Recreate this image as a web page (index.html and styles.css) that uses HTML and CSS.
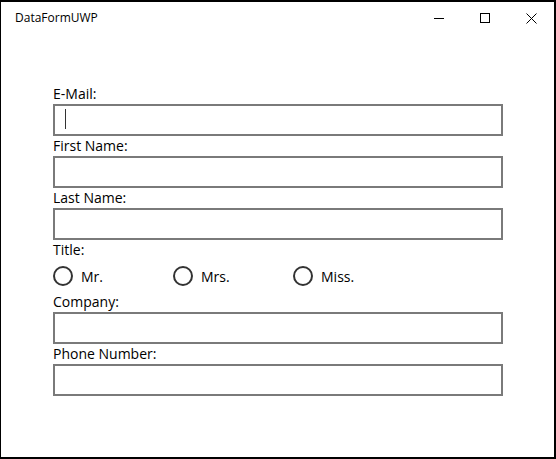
FILE: index.html
```html
<!DOCTYPE html>
<html>
<head>
<meta charset="utf-8">
<link rel="stylesheet" href="styles.css">
</head>
<body>
<div class="window">
  <div class="titlebar">
    <div class="title">DataFormUWP</div>
    <div class="controls">
      <div class="ctl"><svg width="10" height="10" viewBox="0 0 10 10"><path d="M0 5.5H10" stroke="#000" stroke-width="1"/></svg></div>
      <div class="ctl"><svg width="10" height="10" viewBox="0 0 10 10"><rect x="0.5" y="0.5" width="9" height="9" fill="none" stroke="#000" stroke-width="1"/></svg></div>
      <div class="ctl"><svg width="11" height="11" viewBox="0 0 11 11"><path d="M0.5 0.5L10.5 10.5M10.5 0.5L0.5 10.5" stroke="#000" stroke-width="1"/></svg></div>
    </div>
  </div>
  <div class="form">
    <div class="label">E-Mail:</div>
    <div class="box focused"><span class="caret"></span></div>
    <div class="label">First Name:</div>
    <div class="box"></div>
    <div class="label">Last Name:</div>
    <div class="box"></div>
    <div class="label">Title:</div>
    <div class="radios">
      <div class="radio"><span class="circle"></span><span>Mr.</span></div>
      <div class="radio"><span class="circle"></span><span>Mrs.</span></div>
      <div class="radio"><span class="circle"></span><span>Miss.</span></div>
    </div>
    <div class="label">Company:</div>
    <div class="box"></div>
    <div class="label">Phone Number:</div>
    <div class="box"></div>
  </div>
</div>
</body>
</html>
```
FILE: styles.css
```css
html, body {
  margin: 0;
  padding: 0;
  background: #fff;
}
.window {
  box-sizing: border-box;
  width: 556px;
  height: 459px;
  border-style: solid;
  border-color: #000;
  border-width: 2px 2px 2px 1px;
  background: #fff;
  font-family: "Open Sans", "Noto Sans", sans-serif;
  color: #000;
}
.titlebar {
  height: 32px;
  display: flex;
  align-items: center;
  justify-content: space-between;
}
.title {
  padding-left: 14px;
  font-size: 12px;
  line-height: 16px;
  margin-top: -1px;
}
.controls {
  display: flex;
  height: 32px;
}
.ctl {
  width: 46px;
  height: 32px;
  display: flex;
  align-items: center;
  justify-content: center;
}
.form {
  padding: 50px 0 0 52px;
  width: 450px;
}
.label {
  font-size: 14px;
  line-height: 20px;
  height: 20px;
}
.box {
  box-sizing: border-box;
  height: 32px;
  border: 2px solid #7a7a7a;
  width: 450px;
  position: relative;
}
.caret {
  position: absolute;
  left: 10px;
  top: 3px;
  width: 1px;
  height: 20px;
  background: #333;
}
.radios {
  display: flex;
  height: 32px;
  align-items: center;
}
.radio {
  width: 120px;
  display: flex;
  align-items: center;
  font-size: 14px;
}
.circle {
  box-sizing: border-box;
  width: 20px;
  height: 20px;
  border: 2px solid #333;
  border-radius: 50%;
  margin-right: 8px;
}
```
